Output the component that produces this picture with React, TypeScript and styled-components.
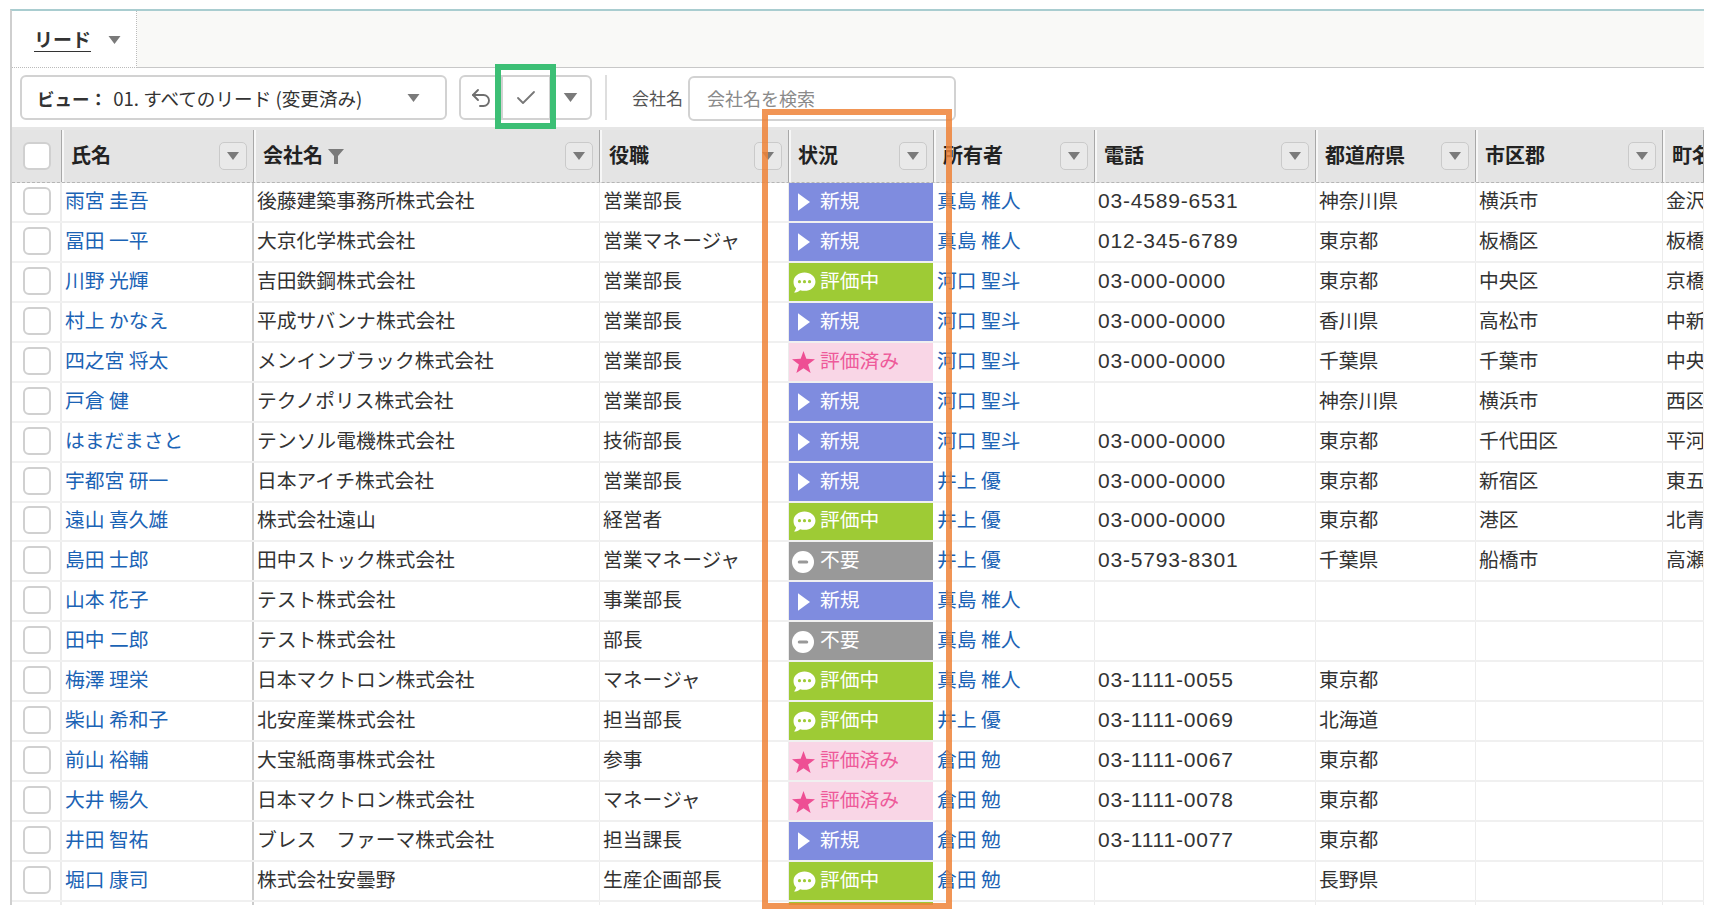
import React from "react";
import styled, { createGlobalStyle } from "styled-components";
import { Check, Undo2 } from "lucide-react";

const GRID = "50px 192px 346px 189px 145px 161px 221px 160px 187px 41px";
const FONT = `"Noto Sans CJK JP", "Noto Sans", sans-serif`;

type Status = "new" | "working" | "done" | "no";

const STATUS: Record<Status, { label: string; bg: string; color: string }> = {
	new: { label: "新規", bg: "#7f8cdf", color: "#ffffff" },
	working: { label: "評価中", bg: "#9ecb35", color: "#ffffff" },
	done: { label: "評価済み", bg: "#f9d6e6", color: "#ee5a9a" },
	no: { label: "不要", bg: "#999999", color: "#ffffff" },
};

const COLUMNS = ["氏名", "会社名", "役職", "状況", "所有者", "電話", "都道府県", "市区郡", "町名"];

const ROWS: [string, string, string, Status, string, string, string, string, string][] = [
	["雨宮 圭吾", "後藤建築事務所株式会社", "営業部長", "new", "真島 椎人", "03-4589-6531", "神奈川県", "横浜市", "金沢"],
	["冨田 一平", "大京化学株式会社", "営業マネージャ", "new", "真島 椎人", "012-345-6789", "東京都", "板橋区", "板橋"],
	["川野 光輝", "吉田鉄鋼株式会社", "営業部長", "working", "河口 聖斗", "03-000-0000", "東京都", "中央区", "京橋"],
	["村上 かなえ", "平成サバンナ株式会社", "営業部長", "new", "河口 聖斗", "03-000-0000", "香川県", "高松市", "中新"],
	["四之宮 将太", "メンインブラック株式会社", "営業部長", "done", "河口 聖斗", "03-000-0000", "千葉県", "千葉市", "中央"],
	["戸倉 健", "テクノポリス株式会社", "営業部長", "new", "河口 聖斗", "", "神奈川県", "横浜市", "西区"],
	["はまだまさと", "テンソル電機株式会社", "技術部長", "new", "河口 聖斗", "03-000-0000", "東京都", "千代田区", "平河"],
	["宇都宮 研一", "日本アイチ株式会社", "営業部長", "new", "井上 優", "03-000-0000", "東京都", "新宿区", "東五"],
	["遠山 喜久雄", "株式会社遠山", "経営者", "working", "井上 優", "03-000-0000", "東京都", "港区", "北青"],
	["島田 士郎", "田中ストック株式会社", "営業マネージャ", "no", "井上 優", "03-5793-8301", "千葉県", "船橋市", "高瀬"],
	["山本 花子", "テスト株式会社", "事業部長", "new", "真島 椎人", "", "", "", ""],
	["田中 二郎", "テスト株式会社", "部長", "no", "真島 椎人", "", "", "", ""],
	["梅澤 理栄", "日本マクトロン株式会社", "マネージャ", "working", "真島 椎人", "03-1111-0055", "東京都", "", ""],
	["柴山 希和子", "北安産業株式会社", "担当部長", "working", "井上 優", "03-1111-0069", "北海道", "", ""],
	["前山 裕輔", "大宝紙商事株式会社", "参事", "done", "倉田 勉", "03-1111-0067", "東京都", "", ""],
	["大井 暢久", "日本マクトロン株式会社", "マネージャ", "done", "倉田 勉", "03-1111-0078", "東京都", "", ""],
	["井田 智祐", "ブレス　ファーマ株式会社", "担当課長", "new", "倉田 勉", "03-1111-0077", "東京都", "", ""],
	["堀口 康司", "株式会社安曇野", "生産企画部長", "working", "倉田 勉", "", "長野県", "", ""],
];

const Triangle = ({ w = 13, h = 8, color = "#7a7a7a" }: { w?: number; h?: number; color?: string }) => (
	<svg width={w} height={h} viewBox="0 0 12 8">
		<polygon points="0,0 12,0 6,8" fill={color} />
	</svg>
);

const StatusIcon = ({ kind }: { kind: Status }) => {
	if (kind === "new") {
		return (
			<svg width="12" height="18" viewBox="0 0 11 16">
				<polygon points="0,0 11,8 0,16" fill="#fff" />
			</svg>
		);
	}
	if (kind === "working") {
		return (
			<svg width="23" height="21" viewBox="0 0 22 20">
				<path d="M11 .5c5.8 0 10.5 3.8 10.5 8.7S16.8 18 11 18c-1.5 0-2.9-.2-4.2-.7-1.5 1.3-3.500 2.200-5.800 2.200 1-1.100 1.700-2.400 1.900-4C1.200 13.900.5 11.700.5 9.200.5 4.300 5.200.5 11 .5z" fill="#fff" />
				<circle cx="6.200" cy="9.200" r="1.500" fill="#9ecb35" />
				<circle cx="11" cy="9.200" r="1.500" fill="#9ecb35" />
				<circle cx="15.800" cy="9.200" r="1.500" fill="#9ecb35" />
			</svg>
		);
	}
	if (kind === "done") {
		return (
			<svg width="23" height="22" viewBox="0 0 22 21">
				<polygon points="11,0 13.700,7.500 22,7.900 15.400,13 17.800,21 11,16.400 4.200,21 6.600,13 0,7.900 8.300,7.500" fill="#ee4f94" />
			</svg>
		);
	}
	return (
		<svg width="22" height="22" viewBox="0 0 21 21">
			<circle cx="10.500" cy="10.500" r="10.500" fill="#fff" />
			<rect x="5.500" y="9" width="10" height="3" rx="1.500" fill="#999" />
		</svg>
	);
};

const iconInset = (kind: Status) => (kind === "new" ? 9 : kind === "working" ? 4 : 3);

export default function App() {
	return (
		<Page>
			<GlobalStyle />
			<Frame>
				<TabBar>
					<Tab>
						<TabLabel>リード</TabLabel>
						<Triangle />
					</Tab>
				</TabBar>
				<Toolbar>
					<ViewSelect>
						<ViewText>
							<strong>ビュー：</strong> 01. すべてのリード (変更済み)
						</ViewText>
						<Triangle />
					</ViewSelect>
					<ButtonGroup>
						<GroupButton>
							<Undo2 size={24} strokeWidth={1.9} color="#6f6f6f" />
						</GroupButton>
						<CheckButton>
							<Check size={24} strokeWidth={1.8} color="#777" />
						</CheckButton>
						<GroupButton>
							<Triangle w={15} h={9} />
						</GroupButton>
					</ButtonGroup>
					<Divider />
					<SearchLabel>会社名</SearchLabel>
					<SearchInput placeholder="会社名を検索" readOnly />
				</Toolbar>
				<Table>
					<HeaderRow>
						<HeaderCheckCell>
							<Box />
						</HeaderCheckCell>
						{COLUMNS.map((name, i) => (
							<HeaderCell key={name}>
								<HeaderLabel>{name}</HeaderLabel>
								{name === "会社名" && (
									<svg width="16" height="15" viewBox="0 0 16 15">
										<polygon points="0,0 16,0 10,7 10,15 6,15 6,7" fill="#7a7a7a" />
									</svg>
								)}
								{i < 8 && (
									<FilterButton>
										<Triangle w={12} h={8} />
									</FilterButton>
								)}
							</HeaderCell>
						))}
					</HeaderRow>
					{ROWS.map((r) => (
						<Row key={r[0]}>
							<CheckCell>
								<Box />
							</CheckCell>
							<NameCell>{r[0]}</NameCell>
							<Cell>{r[1]}</Cell>
							<Cell>{r[2]}</Cell>
							<StatusCell $bg={STATUS[r[3]].bg} $color={STATUS[r[3]].color}>
								<IconSlot $inset={iconInset(r[3])}>
									<StatusIcon kind={r[3]} />
								</IconSlot>
								{STATUS[r[3]].label}
							</StatusCell>
							<LinkCell>{r[4]}</LinkCell>
							<PhoneCell>{r[5]}</PhoneCell>
							<Cell>{r[6]}</Cell>
							<Cell>{r[7]}</Cell>
							<Cell>{r[8]}</Cell>
						</Row>
					))}
					<Row>
						<CheckCell />
						<NameCell />
						<Cell />
						<Cell />
						<StatusCell $bg={STATUS.working.bg} $color="#fff" />
						<LinkCell />
						<PhoneCell />
						<Cell />
						<Cell />
						<Cell />
					</Row>
				</Table>
			</Frame>
			<GreenMark />
			<OrangeMark />
		</Page>
	);
}

const GlobalStyle = createGlobalStyle`
	html, body {
		margin: 0;
		padding: 0;
		background: #fff;
	}
`;

const Page = styled.div`
	position: relative;
	box-sizing: border-box;
	width: 1730px;
	height: 922px;
	padding: 9px 26px 0 10px;
	overflow: hidden;
	background: #fff;
	font-family: ${FONT};
	color: #333;
`;

const Frame = styled.div`
	box-sizing: border-box;
	width: 1694px;
	height: 896px;
	border-top: 2px solid #a9cdd0;
	border-left: 2px solid #cfcfcf;
	overflow: hidden;
`;

const TabBar = styled.div`
	box-sizing: border-box;
	display: flex;
	height: 57px;
	background: #f9f9f7;
	border-bottom: 1px solid #c8c8c8;
`;

const Tab = styled.div`
	box-sizing: border-box;
	display: flex;
	align-items: center;
	gap: 17px;
	width: 125px;
	height: 57px;
	padding: 1px 0 0 22px;
	background: #fff;
	border-right: 1px dotted #bbb;
	border-bottom: 1px dotted #bbb;
`;

const TabLabel = styled.span`
	margin-bottom: 3px;
	font-size: 19px;
	font-weight: 700;
	color: #333;
	text-decoration: underline;
	text-underline-offset: 4px;
`;

const Toolbar = styled.div`
	box-sizing: border-box;
	display: flex;
	align-items: flex-start;
	height: 59px;
	padding: 7px 0 0 8px;
`;

const ViewSelect = styled.div`
	box-sizing: border-box;
	display: flex;
	align-items: center;
	justify-content: space-between;
	width: 427px;
	height: 45px;
	padding: 0 25px 0 15px;
	border: 2px solid #d2d2d2;
	border-radius: 6px;
`;

const ViewText = styled.span`
	font-size: 18.6px;
	color: #333;
	white-space: nowrap;

	strong {
		margin-right: 2px;
		font-size: 17.5px;
		font-weight: 700;
	}
`;

const ButtonGroup = styled.div`
	box-sizing: border-box;
	display: flex;
	width: 133px;
	height: 45px;
	margin-left: 12px;
	border: 2px solid #d2d2d2;
	border-radius: 6px;
`;

const GroupButton = styled.div`
	flex: 1;
	display: flex;
	align-items: center;
	justify-content: center;
`;

const CheckButton = styled(GroupButton)`
	flex: 0 0 46px;
	border-left: 2px solid #d2d2d2;
	border-right: 2px solid #d2d2d2;
`;

const Divider = styled.div`
	flex: 0 0 2px;
	height: 45px;
	margin-left: 13px;
	background: #dedede;
`;

const SearchLabel = styled.label`
	margin-left: 25px;
	line-height: 46px;
	font-size: 17px;
	color: #555;
`;

const SearchInput = styled.input`
	box-sizing: border-box;
	width: 268px;
	height: 45px;
	margin: 1px 0 0 5px;
	padding: 0 17px 2px;
	border: 2px solid #d2d2d2;
	border-radius: 6px;
	outline: none;
	font-family: ${FONT};
	font-size: 18px;

	&::placeholder {
		color: #8a8a8a;
	}
`;

const Table = styled.div`
	border-top: 3px solid #e6e6e6;
`;

const HeaderRow = styled.div`
	box-sizing: border-box;
	display: grid;
	grid-template-columns: ${GRID};
	height: 53px;
	background: #e4e4e4;
	border-bottom: 1px dashed #b5b5b5;
`;

const HeaderCheckCell = styled.div`
	box-sizing: border-box;
	display: flex;
	align-items: center;
	padding-left: 11px;
	border-right: 1px solid #a8a8a8;
`;

const HeaderCell = styled.div`
	box-sizing: border-box;
	display: flex;
	align-items: center;
	gap: 5px;
	min-width: 0;
	overflow: hidden;
	padding: 0 6px 0 7px;
	border-left: 2px solid #f7f7f7;
	border-right: 1px solid #a8a8a8;
`;

const HeaderLabel = styled.span`
	margin-bottom: 4px;
	font-size: 20px;
	font-weight: 700;
	color: #222;
	white-space: nowrap;
`;

const FilterButton = styled.div`
	box-sizing: border-box;
	display: flex;
	align-items: center;
	justify-content: center;
	flex: 0 0 28px;
	height: 28px;
	margin-left: auto;
	border: 1.500px solid #cacaca;
	border-radius: 5px;
	background: #e9e9e9;
`;

const Box = styled.div`
	box-sizing: border-box;
	width: 28px;
	height: 28px;
	background: #fff;
	border: 2px solid #d0d0d0;
	border-radius: 6px;
`;

const Row = styled.div`
	box-sizing: border-box;
	display: grid;
	grid-template-columns: ${GRID};
	height: 39.95px;
	border-bottom: 2px solid #f0f0f0;
`;

const Cell = styled.div`
	box-sizing: border-box;
	display: flex;
	align-items: center;
	min-width: 0;
	overflow: hidden;
	padding: 0 0 5px 3px;
	border-right: 1px solid #ececec;
	font-size: 19.8px;
	color: #333;
	white-space: nowrap;
`;

const CheckCell = styled(Cell)`
	padding: 0 0 2px 11px;
	border-right: 2px solid #ececec;
`;

const LinkCell = styled(Cell)`
	color: #1b63b5;
`;

const NameCell = styled(LinkCell)`
	border-right: 2px solid #cccccc;
`;

const PhoneCell = styled(Cell)`
	padding-bottom: 2px;
	font-family: "Liberation Sans", sans-serif;
	font-size: 21px;
	letter-spacing: 0.800px;
`;

const StatusCell = styled(Cell)<{ $bg: string; $color: string }>`
	padding-left: 0;
	background: ${(p) => p.$bg};
	color: ${(p) => p.$color};
	border-right: 1px solid #fff;
`;

const IconSlot = styled.span<{ $inset: number }>`
	display: flex;
	align-items: center;
	flex: 0 0 31px;
	box-sizing: border-box;
	height: 100%;
	padding: 6px 0 0 ${(p) => p.$inset}px;
`;

const GreenMark = styled.div`
	position: absolute;
	left: 495px;
	top: 64px;
	box-sizing: border-box;
	width: 61px;
	height: 65px;
	border: 6px solid #3cbf75;
`;

const OrangeMark = styled.div`
	position: absolute;
	left: 762px;
	top: 109px;
	box-sizing: border-box;
	width: 190px;
	height: 800px;
	border: 6px solid rgba(238, 130, 55, 0.85);
`;
